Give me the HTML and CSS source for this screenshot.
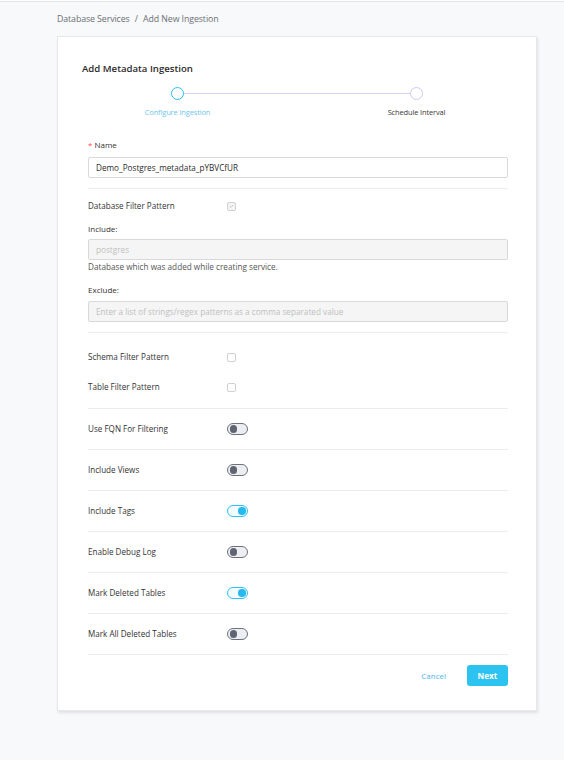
FILE: index.html
```html
<!DOCTYPE html>
<html>
<head>
<meta charset="utf-8">
<link rel="stylesheet" href="styles.css">
</head>
<body>
<div class="topline"></div>
<div class="crumbs">Database Services <span class="sep">/</span> Add New Ingestion</div>
<div class="card">
  <div class="title">Add Metadata Ingestion</div>
  <div class="stepper">
    <div class="step">
      <div class="dot active"></div>
      <div class="step-label active">Configure Ingestion</div>
    </div>
    <div class="step">
      <div class="dot"></div>
      <div class="step-label">Schedule Interval</div>
    </div>
    <div class="step-line"></div>
  </div>
  <div class="form">
    <div class="label name-label"><span class="req">*</span> Name</div>
    <div class="input">Demo_Postgres_metadata_pYBVCfUR</div>
    <div class="divider d1"></div>
    <div class="row check-row r-db">
      <div class="row-label">Database Filter Pattern</div>
      <div class="checkbox checked"><svg viewBox="0 0 10 10" width="8" height="8"><path d="M2.2 5.2 L4.2 7 L7.8 3.2" fill="none" stroke="#b8b8b8" stroke-width="1.1"/></svg></div>
    </div>
    <div class="label sub-label l-inc">Include:</div>
    <div class="input disabled i-inc">postgres</div>
    <div class="help">Database which was added while creating service.</div>
    <div class="label sub-label l-exc">Exclude:</div>
    <div class="input disabled i-exc">Enter a list of strings/regex patterns as a comma separated value</div>
    <div class="divider d2"></div>
    <div class="row check-row r-schema">
      <div class="row-label">Schema Filter Pattern</div>
      <div class="checkbox"></div>
    </div>
    <div class="row check-row r-table">
      <div class="row-label">Table Filter Pattern</div>
      <div class="checkbox"></div>
    </div>
    <div class="divider d3"></div>
    <div class="row toggle-row">
      <div class="row-label">Use FQN For Filtering</div>
      <div class="toggle"><span class="knob"></span></div>
    </div>
    <div class="divider"></div>
    <div class="row toggle-row">
      <div class="row-label">Include Views</div>
      <div class="toggle"><span class="knob"></span></div>
    </div>
    <div class="divider"></div>
    <div class="row toggle-row">
      <div class="row-label">Include Tags</div>
      <div class="toggle on"><span class="knob"></span></div>
    </div>
    <div class="divider"></div>
    <div class="row toggle-row">
      <div class="row-label">Enable Debug Log</div>
      <div class="toggle"><span class="knob"></span></div>
    </div>
    <div class="divider"></div>
    <div class="row toggle-row">
      <div class="row-label">Mark Deleted Tables</div>
      <div class="toggle on"><span class="knob"></span></div>
    </div>
    <div class="divider"></div>
    <div class="row toggle-row">
      <div class="row-label">Mark All Deleted Tables</div>
      <div class="toggle"><span class="knob"></span></div>
    </div>
    <div class="divider"></div>
    <div class="actions">
      <button class="btn-cancel">Cancel</button>
      <button class="btn-next">Next</button>
    </div>
  </div>
</div>
</body>
</html>
```

FILE: styles.css
```css
* { box-sizing: border-box; }
html, body { margin: 0; padding: 0; }
body {
  background: #f8f9fa;
  font-family: "Open Sans", "Noto Sans", sans-serif;
  color: #37352f;
  height: 760px;
}
.topline {
  height: 2px;
  background: #ffffff;
  border-bottom: 1px solid #e4e6ea;
}
.crumbs {
  padding-left: 57px;
  margin-top: 11px;
  height: 13px;
  line-height: 13px;
  font-size: 8.8px;
  color: #6b6f76;
  letter-spacing: -0.1px;
}
.crumbs .sep { margin: 0 3px; }
.card {
  margin-left: 57px;
  margin-top: 10px;
  width: 480px;
  background: #fff;
  border: 1px solid #e6e8eb;
  box-shadow: 1px 2px 3px rgba(0,0,0,0.10);
  padding-bottom: 24px;
}
.title {
  padding-left: 24px;
  margin-top: 25px;
  height: 14px;
  line-height: 14px;
  font-size: 9.6px;
  font-weight: 600;
  color: #2b2b2b;
}
.stepper {
  position: relative;
  display: grid;
  grid-template-columns: 1fr 1fr;
  margin-top: 11px;
}
.step {
  display: flex;
  flex-direction: column;
  align-items: center;
  position: relative;
  z-index: 1;
}
.dot {
  width: 13px;
  height: 13px;
  border-radius: 50%;
  border: 1.3px solid #d4c9f2;
  background: #fff;
}
.dot.active { border-color: #28c0ee; }
.step-label {
  margin-top: 7px;
  height: 11px;
  line-height: 11px;
  font-size: 7.5px;
  color: #3a3a3a;
  letter-spacing: -0.15px;
}
.step-label.active { color: #6fc5ee; }
.step-line {
  position: absolute;
  top: 6px;
  left: 25%;
  right: 25%;
  height: 1px;
  background: #d9cff5;
}
.form {
  padding: 0 28px 0 30px;
}
.label {
  height: 12px;
  line-height: 12px;
  font-size: 8px;
  color: #333;
}
.name-label { margin-top: 21px; }
.req { color: #ff4d4f; }
.input {
  height: 21px;
  line-height: 19px;
  border: 1px solid #d9d9d9;
  border-radius: 2px;
  padding-left: 7px;
  font-size: 8.2px;
  color: #2b2b2b;
  margin-top: 6px;
  white-space: nowrap;
  overflow: hidden;
}
.input.disabled {
  background: #f5f5f5;
  color: #bfbfbf;
}
.i-inc { margin-top: 4px; }
.i-exc { margin-top: 5px; }
.help {
  margin-top: 1px;
  height: 12px;
  line-height: 12px;
  font-size: 8.2px;
  color: #555;
}
.l-inc { margin-top: 9px; }
.l-exc { margin-top: 11px; }
.divider {
  height: 1px;
  background: #ececec;
}
.d1 { margin-top: 10px; }
.d2 { margin-top: 10px; }
.d3 { margin-top: 13px; }
.row {
  display: flex;
  align-items: center;
}
.row-label {
  width: 139px;
  font-size: 8.1px;
  color: #333;
  line-height: 12px;
}
.check-row { height: 16px; }
.r-db { margin-top: 9px; }
.r-schema { margin-top: 16px; }
.r-table { margin-top: 14px; }
.checkbox {
  width: 9px;
  height: 9px;
  border: 1px solid #d0d0d0;
  border-radius: 2px;
  background: #fff;
  display: flex;
  align-items: center;
  justify-content: center;
}
.checkbox.checked { background: #f5f5f5; }
.checkbox svg { display: block; }
.toggle-row { height: 40px; }
.toggle {
  width: 21px;
  height: 12px;
  border-radius: 6px;
  border: 1.3px solid #6b7280;
  background: #eceef1;
  display: flex;
  align-items: center;
  padding: 0 1.5px;
}
.knob {
  width: 7.5px;
  height: 7.5px;
  border-radius: 50%;
  background: #5f6470;
}
.toggle.on {
  border-color: #2ec3f2;
  background: #f2fbff;
  justify-content: flex-end;
}
.toggle.on .knob { background: #26b9f0; }
.actions {
  display: flex;
  justify-content: flex-end;
  align-items: center;
  margin-top: 10px;
  gap: 21px;
}
.btn-cancel {
  border: none;
  background: none;
  padding: 0;
  font-family: inherit;
  font-size: 8px;
  color: #4cb6ee;
}
.btn-next {
  border: none;
  border-radius: 3px;
  background: #2cc3f1;
  color: #fff;
  font-family: inherit;
  font-size: 8.2px;
  font-weight: 700;
  width: 41px;
  height: 21px;
  padding: 0;
}
```
